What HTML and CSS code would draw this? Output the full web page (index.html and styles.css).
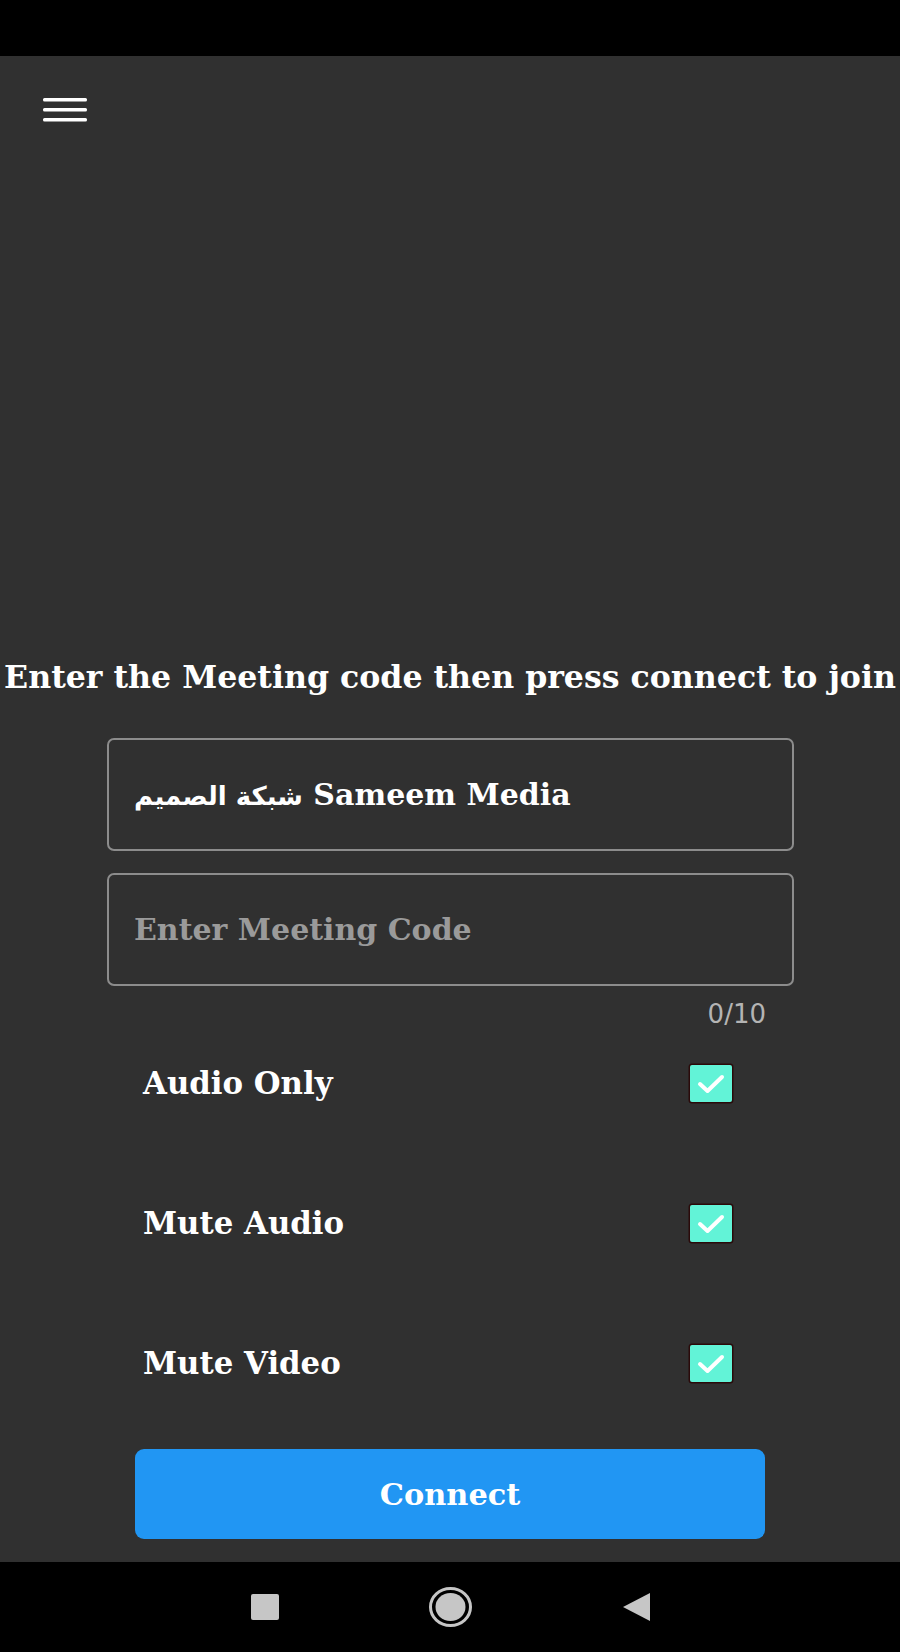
FILE: index.html
```html
<!DOCTYPE html>
<html>
<head>
<meta charset="utf-8">
<link rel="stylesheet" href="styles.css">
</head>
<body>
<div class="status"></div>
<div class="app">
  <div class="toolbar">
    <svg class="menu" width="44" height="24" viewBox="0 0 44 24">
      <rect x="0" y="0" width="44" height="3.5" rx="1.5" fill="#fff"/>
      <rect x="0" y="10" width="44" height="3.5" rx="1.5" fill="#fff"/>
      <rect x="0" y="20" width="44" height="3.5" rx="1.5" fill="#fff"/>
    </svg>
  </div>
  <h1 class="title">Enter the Meeting code then press connect to join</h1>
  <div class="form">
    <div class="field"><span class="value"><span class="arabic">شبكة الصميم</span> Sameem Media</span></div>
    <div class="field second"><span class="placeholder">Enter Meeting Code</span></div>
    <div class="counter">0/10</div>
    <div class="option">
      <span class="label">Audio Only</span>
      <span class="check"><svg width="42" height="37" viewBox="0 0 42 37"><polyline points="10,19 17.5,26 32,12" fill="none" stroke="#fff" stroke-width="4" stroke-linecap="round" stroke-linejoin="round"/></svg></span>
    </div>
    <div class="option">
      <span class="label">Mute Audio</span>
      <span class="check"><svg width="42" height="37" viewBox="0 0 42 37"><polyline points="10,19 17.5,26 32,12" fill="none" stroke="#fff" stroke-width="4" stroke-linecap="round" stroke-linejoin="round"/></svg></span>
    </div>
    <div class="option">
      <span class="label">Mute Video</span>
      <span class="check"><svg width="42" height="37" viewBox="0 0 42 37"><polyline points="10,19 17.5,26 32,12" fill="none" stroke="#fff" stroke-width="4" stroke-linecap="round" stroke-linejoin="round"/></svg></span>
    </div>
    <div class="button">Connect</div>
  </div>
</div>
<div class="nav">
  <svg width="28" height="26" viewBox="0 0 28 26"><rect x="0" y="0" width="28" height="26" rx="2" fill="#c6c6c6"/></svg>
  <svg width="43" height="40" viewBox="0 0 43 40"><ellipse cx="21.5" cy="20" rx="20" ry="18.5" fill="none" stroke="#c6c6c6" stroke-width="3"/><ellipse cx="21.5" cy="20" rx="15" ry="14" fill="#c6c6c6"/></svg>
  <svg width="28" height="28" viewBox="0 0 28 28"><polygon points="28,0 28,28 1,14" fill="#c6c6c6"/></svg>
</div>
</body>
</html>
```

FILE: styles.css
```css
html, body {
  margin: 0;
  padding: 0;
  background: #000;
}
body {
  width: 900px;
  height: 1652px;
  overflow: hidden;
  font-family: "DejaVu Serif", "DejaVu Sans", serif;
  color: #fff;
}
.status {
  height: 56px;
  background: #000;
}
.app {
  height: 1506px;
  background: #303030;
  display: flex;
  flex-direction: column;
}
.toolbar {
  padding: 42px 0 0 43px;
  height: 24px;
}
.menu {
  display: block;
}
.title {
  margin: 535px 0 0 0;
  font-size: 31.6px;
  line-height: 40px;
  font-weight: bold;
  text-align: center;
  white-space: nowrap;
}
.form {
  margin: 41px 0 0 107px;
  width: 687px;
  display: flex;
  flex-direction: column;
}
.field {
  box-sizing: border-box;
  height: 113px;
  border: 2px solid #8c8c8c;
  border-radius: 7px;
  display: flex;
  align-items: center;
  padding-left: 25px;
  font-size: 30px;
  font-weight: bold;
}
.field.second {
  margin-top: 22px;
}
.value {
  color: #fff;
}
.arabic {
  font-size: 26px;
  font-family: "DejaVu Sans", sans-serif;
  font-weight: bold;
}
.placeholder {
  color: #9a9a9a;
}
.counter {
  margin-top: 13px;
  align-self: flex-end;
  margin-right: 28px;
  font-size: 26px;
  line-height: 30px;
  color: #b4b4b4;
  font-family: "DejaVu Sans", sans-serif;
}
.option {
  height: 60px;
  display: flex;
  align-items: center;
  justify-content: space-between;
  padding: 0 62px 0 36px;
  margin-top: 80px;
}
.counter + .option {
  margin-top: 24px;
}
.label {
  font-size: 30.8px;
  font-weight: bold;
}
.check {
  width: 42px;
  height: 37px;
  background: #62f3d7;
  border-radius: 2px;
  box-shadow: 0 0 0 1.5px #2a0a0a;
  display: block;
}
.check svg {
  display: block;
}
.button {
  margin: 56px 0 0 28px;
  width: 630px;
  height: 90px;
  background: #2196f3;
  border-radius: 9px;
  display: flex;
  align-items: center;
  justify-content: center;
  font-size: 30.4px;
  font-weight: bold;
}
.nav {
  height: 90px;
  background: #000;
  display: flex;
  align-items: center;
  justify-content: center;
  gap: 150px;
}
.nav svg {
  display: block;
}
```
